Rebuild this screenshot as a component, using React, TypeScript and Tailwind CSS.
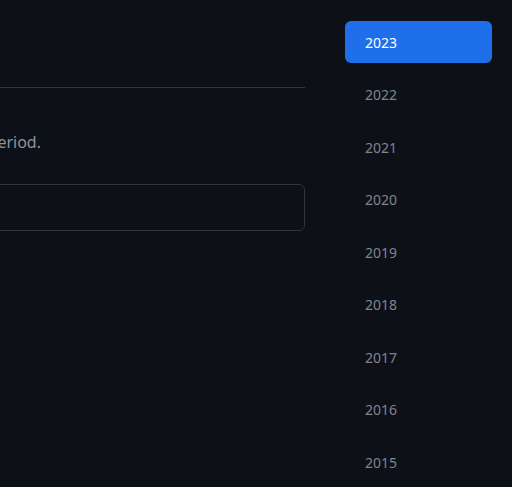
export default function App() {
  const years = [2023, 2022, 2021, 2020, 2019, 2018, 2017, 2016, 2015];
  return (
    <div
      className="min-h-screen bg-[#0d1117] flex overflow-hidden"
      style={{ fontFamily: '"Noto Sans", "Open Sans", sans-serif' }}
    >
      <div className="w-[305px] shrink-0">
        <div className="h-[88px] border-b border-[#30363d]" />
        <div className="mt-[42px] flex justify-end w-[41px]">
          <p className="whitespace-nowrap text-[16px] leading-6 text-[#8b949e]">
            No contribution activity was found for this time period.
          </p>
        </div>
        <div className="mt-[30px] h-[47px] w-[calc(100%+8px)] -ml-2 rounded-md border border-[#30363d]" />
      </div>
      <div className="ml-10 mr-5 mt-[21px] flex-1 flex flex-col gap-[10.5px]">
        {years.map((y, i) => (
          <div
            key={y}
            className={
              "h-[42px] flex items-center pl-5 rounded-md text-[14px] " +
              (i === 0 ? "bg-[#1f6feb] text-white" : "text-[#7d8590]")
            }
          >
            {y}
          </div>
        ))}
      </div>
    </div>
  );
}
